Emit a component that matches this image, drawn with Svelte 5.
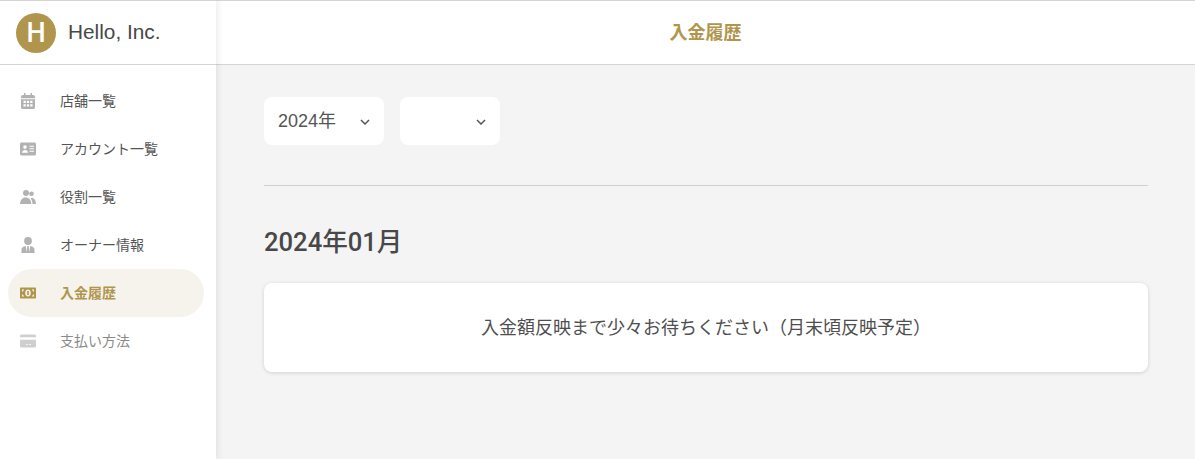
<script lang="ts">
  const items = [
    { label: '店舗一覧', icon: 'calendar' },
    { label: 'アカウント一覧', icon: 'card' },
    { label: '役割一覧', icon: 'people' },
    { label: 'オーナー情報', icon: 'owner' },
    { label: '入金履歴', icon: 'money', active: true },
    { label: '支払い方法', icon: 'payment', muted: true }
  ];
</script>

<div class="layout">
  <aside class="sidebar">
    <div class="brand">
      <span class="logo">H</span>
      <span class="name">Hello, Inc.</span>
    </div>
    <nav class="nav">
      {#each items as item}
        <div class="item" class:active={item.active} class:muted={item.muted}>
          <svg class="icon" viewBox="0 0 16 16" fill="currentColor" aria-hidden="true">
            {#if item.icon === 'calendar'}
              <path fill-rule="evenodd" d="M4 0h1.500v2h5V0H12v2h1.200C14.200 2 15 2.800 15 3.800V14.200c0 1-.8 1.800-1.800 1.800H2.800C1.800 16 1 15.200 1 14.200V3.800C1 2.800 1.800 2 2.800 2H4zM1 5.300v.9h14v-.9zM3.500 7.700v2.200H5.800V7.700zM6.900 7.700v2.200h2.200V7.700zM10.200 7.700v2.200h2.300V7.700zM3.500 11.200v2.200H5.800v-2.200zM6.900 11.200v2.200h2.200v-2.200zM10.200 11.200v2.200h2.300v-2.200z" />
            {:else if item.icon === 'card'}
              <path fill-rule="evenodd" d="M1.500 1.400h13c.8 0 1.500.7 1.500 1.500v10.200c0 .8-.7 1.500-1.500 1.500h-13C.7 14.600 0 13.900 0 13.100V2.900c0-.8.7-1.500 1.500-1.500zM5 4.300a1.800 1.800 0 1 0 0 3.600 1.800 1.800 0 0 0 0-3.600zM2 11.700h6c0-1.600-1.200-2.800-3-2.800s-3 1.200-3 2.800zM9.500 4.800v1h4.500v-1zM9.500 7.300v1h4.500v-1zM9.500 9.800v1h4.500v-1z" />
            {:else if item.icon === 'people'}
              <circle cx="6" cy="4" r="3" />
              <circle cx="11.500" cy="4.700" r="2.300" />
              <path d="M0 15c0-3.800 2.500-6.500 5.700-6.500S11.300 11.200 11.300 15z" />
              <path d="M12.500 15c0-2.600-.8-4.400-2-5.800.5-.2 1-.3 1.500-.3 2.300 0 4 2.400 4 6.100z" />
            {:else if item.icon === 'owner'}
              <circle cx="8" cy="4" r="3.900" />
              <path d="M1.500 16v-3.500c0-2 1.700-3.300 4.300-3.600l1 7.100zM14.500 16v-3.500c0-2-1.700-3.300-4.300-3.600l-1 7.100zM7.300 9h1.400l.7 7H6.600z" />
            {:else if item.icon === 'money'}
              <path fill-rule="evenodd" d="M1 2.500h14c.6 0 1 .4 1 1v9c0 .6-.4 1-1 1H1c-.6 0-1-.4-1-1v-9c0-.6.4-1 1-1zM2 4.500v2h1v-1h1v-1zM12 4.500v1h1v1h1v-2zM2 9.500v2h2v-1H3v-1zM13 9.500v1h-1v1h2v-2zM8 4.500C6.300 4.500 5.200 6 5.200 8s1.100 3.500 2.800 3.500 2.800-1.500 2.800-3.500S9.700 4.500 8 4.500z" />
              <rect x="7.200" y="6" width="1.600" height="4" />
            {:else}
              <path fill-rule="evenodd" d="M1.500 1.500h13c.8 0 1.500.7 1.500 1.500v1.300H0V3c0-.8.7-1.500 1.500-1.500zM0 6.800h16V13c0 .8-.7 1.500-1.500 1.500h-13C.7 14.500 0 13.800 0 13zM6 11.200v.9h2v-.9zM9 11.200v.9h2v-.9z" />
            {/if}
          </svg>
          <span class="label">{item.label}</span>
        </div>
      {/each}
    </nav>
  </aside>

  <div class="main">
    <header class="topbar"><span class="title">入金履歴</span></header>
    <main class="content">
      <div class="filters">
        <div class="select year">
          <span class="value">2024年</span>
          <svg class="chevron" viewBox="0 0 10 6" aria-hidden="true"><path d="M1 1l4 4 4-4" /></svg>
        </div>
        <div class="select month">
          <svg class="chevron" viewBox="0 0 10 6" aria-hidden="true"><path d="M1 1l4 4 4-4" /></svg>
        </div>
      </div>
      <hr class="rule" />
      <h2 class="period">2024年01月</h2>
      <div class="notice"><span class="message">入金額反映まで少々お待ちください（月末頃反映予定）</span></div>
    </main>
  </div>
</div>

<style>
  :global(body) {
    margin: 0;
    font-family: "Liberation Sans", "Noto Sans CJK JP", sans-serif;
    color: #4a4a4a;
  }
  .layout {
    display: flex;
    height: 459px;
    overflow: hidden;
    background: #f4f4f4;
  }
  .sidebar {
    width: 216px;
    flex: none;
    background: #fff;
    border-top: 1px solid #d4d4d4;
    box-sizing: border-box;
    box-shadow: 2px 0 6px rgba(0, 0, 0, 0.08);
    position: relative;
    z-index: 1;
  }
  .brand {
    height: 63px;
    display: flex;
    align-items: center;
    gap: 12px;
    padding-left: 16px;
    border-bottom: 1px solid #d4d4d4;
  }
  .logo {
    width: 40px;
    height: 40px;
    border-radius: 50%;
    background: #b0964d;
    color: #fff;
    font-family: Roboto, sans-serif;
    font-size: 27px;
    font-weight: 500;
    line-height: 40px;
    text-align: center;
  }
  .name {
    font-size: 20.8px;
    padding-bottom: 2px;
    color: #484848;
  }
  .nav {
    padding: 12px 12px 0 8px;
  }
  .item {
    height: 48px;
    display: flex;
    align-items: center;
    gap: 24px;
    padding-left: 12px;
    border-radius: 24px;
    font-size: 14px;
    color: #555;
  }
  .label {
    padding-bottom: 2px;
  }
  .icon {
    width: 16px;
    height: 16px;
    flex: none;
    color: #b2b2b2;
  }
  .active {
    background: #f6f3ec;
    color: #b0964d;
    font-weight: 700;
  }
  .active .icon {
    color: #b0964d;
  }
  .muted {
    color: #8a8a8a;
  }
  .muted .icon {
    color: #cfcfcf;
  }
  .main {
    flex: 1;
    min-width: 0;
  }
  .topbar {
    height: 65px;
    box-sizing: border-box;
    background: #fff;
    border-top: 1px solid #d4d4d4;
    border-bottom: 1px solid #d4d4d4;
    display: flex;
    align-items: center;
    justify-content: center;
    color: #b0964d;
    font-size: 18px;
    font-weight: 700;
  }
  .title {
    padding-bottom: 4px;
  }
  .content {
    padding: 32px 47px 0 48px;
  }
  .filters {
    display: flex;
    gap: 16px;
  }
  .select {
    height: 48px;
    background: #fff;
    border-radius: 8px;
    box-sizing: border-box;
    display: flex;
    align-items: center;
    justify-content: space-between;
    padding: 0 14px;
    font-size: 18px;
    color: #555;
  }
  .value {
    padding-bottom: 4px;
  }
  .year {
    width: 120px;
  }
  .month {
    width: 100px;
    justify-content: flex-end;
  }
  .chevron {
    width: 10px;
    height: 6px;
    margin-top: 1px;
    fill: none;
    stroke: #555;
    stroke-width: 1.5;
  }
  .rule {
    border: 0;
    border-top: 1px solid #cfcfcf;
    margin: 40px 0 0;
  }
  .period {
    margin: 43px 0 0;
    font-family: Roboto, "Noto Sans CJK JP", sans-serif;
    font-size: 25.6px;
    line-height: 26px;
    font-weight: 500;
    color: #484848;
  }
  .notice {
    margin-top: 28px;
    height: 89px;
    background: #fff;
    border-radius: 8px;
    box-shadow: 0 1px 4px rgba(0, 0, 0, 0.14);
    display: flex;
    align-items: center;
    justify-content: center;
    font-size: 18px;
    color: #4f4f4f;
  }
  .message {
    padding-bottom: 4px;
  }
</style>
